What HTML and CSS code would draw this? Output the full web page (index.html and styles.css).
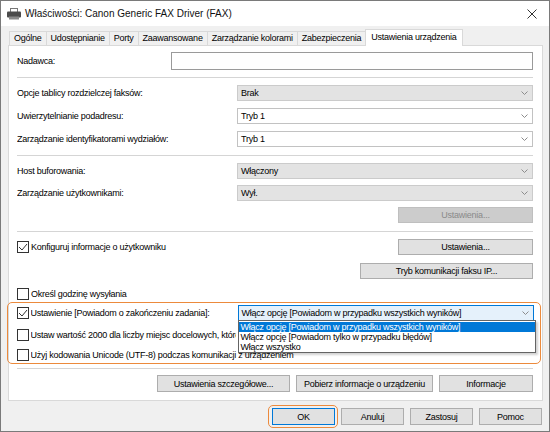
FILE: index.html
```html
<!DOCTYPE html>
<html lang="pl">
<head>
    <meta charset="UTF-8">
    <title>Właściwości: Canon Generic FAX Driver (FAX)</title>
    <link rel="stylesheet" href="styles.css">
</head>
<body>
<div class="window">
    <div class="titlebar">
        <svg class="app-icon" width="14" height="12" viewBox="0 0 14 12">
            <rect x="3.5" y="0.5" width="7" height="4" fill="#fff" stroke="#777"/>
            <rect x="0" y="3.5" width="14" height="6" rx="1" fill="#4b4b4b"/>
            <rect x="2" y="8.5" width="10" height="3" fill="#8a8a8a"/>
        </svg>
        <span class="title">Właściwości: Canon Generic FAX Driver (FAX)</span>
        <svg class="close" width="10" height="10" viewBox="0 0 10 10">
            <path d="M0.5 0.5 L9.5 9.5 M9.5 0.5 L0.5 9.5" stroke="#333" stroke-width="1"/>
        </svg>
    </div>

    <div class="tabs">
        <div class="tab">Ogólne</div>
        <div class="tab">Udostępnianie</div>
        <div class="tab">Porty</div>
        <div class="tab">Zaawansowane</div>
        <div class="tab">Zarządzanie kolorami</div>
        <div class="tab">Zabezpieczenia</div>
        <div class="tab active">Ustawienia urządzenia</div>
    </div>

    <div class="panel">
        <div class="row field-row">
            <span class="label">Nadawca:</span>
            <div class="text-field"></div>
        </div>
        <div class="sep"></div>

        <div class="group">
            <div class="row">
                <span class="label">Opcje tablicy rozdzielczej faksów:</span>
                <div class="select readonly">Brak<svg class="chev" width="7" height="4" viewBox="0 0 7 4"><path d="M0.5 0.5 L3.5 3.5 L6.5 0.5" fill="none" stroke="#8c8c8c"/></svg></div>
            </div>
            <div class="row">
                <span class="label">Uwierzytelnianie podadresu:</span>
                <div class="select">Tryb 1<svg class="chev" width="7" height="4" viewBox="0 0 7 4"><path d="M0.5 0.5 L3.5 3.5 L6.5 0.5" fill="none" stroke="#8c8c8c"/></svg></div>
            </div>
            <div class="row">
                <span class="label">Zarządzanie identyfikatorami wydziałów:</span>
                <div class="select">Tryb 1<svg class="chev" width="7" height="4" viewBox="0 0 7 4"><path d="M0.5 0.5 L3.5 3.5 L6.5 0.5" fill="none" stroke="#8c8c8c"/></svg></div>
            </div>
        </div>
        <div class="sep sep-wide"></div>

        <div class="group tight">
            <div class="row">
                <span class="label">Host buforowania:</span>
                <div class="select readonly">Włączony<svg class="chev" width="7" height="4" viewBox="0 0 7 4"><path d="M0.5 0.5 L3.5 3.5 L6.5 0.5" fill="none" stroke="#8c8c8c"/></svg></div>
            </div>
            <div class="row">
                <span class="label">Zarządzanie użytkownikami:</span>
                <div class="select readonly">Wył.<svg class="chev" width="7" height="4" viewBox="0 0 7 4"><path d="M0.5 0.5 L3.5 3.5 L6.5 0.5" fill="none" stroke="#8c8c8c"/></svg></div>
            </div>
            <div class="row end">
                <div class="btn disabled w-settings">Ustawienia...</div>
            </div>
        </div>
        <div class="sep sep-wide"></div>

        <div class="group loose">
            <div class="row">
                <span class="check checked"><svg width="10" height="10" viewBox="0 0 10 10"><path d="M1 5 L4 8 L9 2" fill="none" stroke="#333" stroke-width="1"/></svg></span>
                <span class="label">Konfiguruj informacje o użytkowniku</span>
                <div class="btn w-settings">Ustawienia...</div>
            </div>
            <div class="row end">
                <div class="btn w-ipfax">Tryb komunikacji faksu IP...</div>
            </div>
            <div class="row check-row">
                <span class="check"></span>
                <span class="label">Określ godzinę wysyłania</span>
            </div>
        </div>

        <div class="highlight-box">
            <div class="row">
                <span class="check checked"><svg width="10" height="10" viewBox="0 0 10 10"><path d="M1 5 L4 8 L9 2" fill="none" stroke="#333" stroke-width="1"/></svg></span>
                <span class="label">Ustawienie [Powiadom o zakończeniu zadania]:</span>
                <div class="select focused">Włącz opcję [Powiadom w przypadku wszystkich wyników]<svg class="chev" width="7" height="4" viewBox="0 0 7 4"><path d="M0.5 0.5 L3.5 3.5 L6.5 0.5" fill="none" stroke="#8c8c8c"/></svg>
                    <ul class="dropdown">
                        <li class="selected">Włącz opcję [Powiadom w przypadku wszystkich wyników]</li>
                        <li>Włącz opcję [Powiadom tylko w przypadku błędów]</li>
                        <li>Włącz wszystko</li>
                    </ul>
                </div>
            </div>
            <div class="row check-row first">
                <span class="check"></span>
                <span class="label clipped">Ustaw wartość 2000 dla liczby miejsc docelowych, które można określić</span>
            </div>
            <div class="row check-row">
                <span class="check"></span>
                <span class="label">Użyj kodowania Unicode (UTF-8) podczas komunikacji z urządzeniem</span>
            </div>
        </div>
        <div class="sep sep-bottom"></div>

        <div class="button-row">
            <div class="btn w-detail">Ustawienia szczegółowe...</div>
            <div class="btn w-fetch">Pobierz informacje o urządzeniu</div>
            <div class="btn w-info">Informacje</div>
        </div>
    </div>

    <div class="dialog-buttons">
        <div class="btn dlg default">OK</div>
        <div class="btn dlg">Anuluj</div>
        <div class="btn dlg">Zastosuj</div>
        <div class="btn dlg">Pomoc</div>
    </div>
</div>
</body>
</html>
```

FILE: styles.css
```css
* {
    box-sizing: border-box;
}
body {
    margin: 0;
    font-family: "Liberation Sans", Arial, sans-serif;
    font-size: 9px;
    letter-spacing: -0.25px;
    color: #000;
    background: #fff;
}
.window {
    width: 550px;
    height: 432px;
    border: 1px solid #7a7a7a;
    background: #f0f0f0;
}

/* title bar */
.titlebar {
    height: 25px;
    background: #fff;
    display: flex;
    align-items: center;
    padding: 0 12px 0 6px;
}
.app-icon {
    margin-right: 4px;
}
.title {
    flex: 1;
    font-size: 10px;
    letter-spacing: 0;
    color: #111;
}

/* tabs */
.tabs {
    height: 19px;
    display: flex;
    align-items: flex-end;
    padding-left: 8px;
}
.tab {
    height: 14px;
    line-height: 13px;
    padding: 0 4px;
    border: 1px solid #d9d9d9;
    border-bottom: none;
    margin-right: -1px;
    background: #f0f0f0;
    white-space: nowrap;
}
.tab.active {
    height: 17px;
    line-height: 14px;
    padding: 0 5px;
    margin-bottom: -1px;
    background: #fff;
    position: relative;
    z-index: 1;
}

/* page */
.panel {
    margin-left: 7px;
    width: 535px;
    height: 356px;
    background: #fff;
    border: 1px solid #d9d9d9;
    padding: 6px 9px 0 8px;
}
.row {
    display: flex;
    align-items: center;
    height: 16px;
}
.row.end {
    justify-content: flex-end;
}
.label {
    flex: 1;
    white-space: nowrap;
    overflow: hidden;
}
.label.clipped {
    flex: none;
    width: 205px;
}
.field-row {
    height: 18px;
}
.text-field {
    width: 362px;
    height: 18px;
    border: 1px solid #9a9a9a;
    background: #fff;
}
.sep {
    height: 1px;
    background: #d5d5d5;
    margin: 7px 0;
}
.sep-wide {
    margin-top: 8px;
}
.sep-bottom {
    margin: 4px 0 6px;
}
.group {
    display: flex;
    flex-direction: column;
    gap: 7px;
}
.group.tight {
    gap: 6px;
}
.group.loose {
    gap: 8px;
}
.check-row {
    height: 14px;
}

/* combo boxes */
.select {
    position: relative;
    width: 296px;
    height: 16px;
    flex: none;
    border: 1px solid #c2c2c2;
    background: #fff;
    display: flex;
    align-items: center;
    justify-content: space-between;
    padding: 0 4px 0 3px;
}
.select.readonly {
    background: #e3e3e3;
    border-color: #cbcbcb;
}
.select.focused {
    background: #e5f1fb;
    border-color: #0078d7;
}
.dropdown {
    position: absolute;
    top: 14px;
    left: -1px;
    width: 298px;
    margin: 0;
    padding: 1px 0 0;
    list-style: none;
    background: #fff;
    border: 1px solid #646464;
    box-shadow: 2px 2px 2px rgba(0, 0, 0, 0.18);
    z-index: 5;
}
.dropdown li {
    height: 10px;
    line-height: 10px;
    padding-left: 2px;
    white-space: nowrap;
}
.dropdown li.selected {
    background: #0078d7;
    color: #fff;
}

/* check boxes */
.check {
    width: 12px;
    height: 12px;
    flex: none;
    border: 1px solid #333;
    background: #fff;
    margin-right: 2px;
    display: flex;
    align-items: center;
    justify-content: center;
}

/* buttons */
.btn {
    height: 16px;
    flex: none;
    border: 1px solid #adadad;
    background: #e1e1e1;
    display: flex;
    align-items: center;
    justify-content: center;
    white-space: nowrap;
}
.btn.disabled {
    background: #cccccc;
    border-color: #bfbfbf;
    color: #8a8a8a;
}
.w-settings {
    width: 135px;
}
.w-ipfax {
    width: 173px;
}
.w-detail {
    width: 133px;
}
.w-fetch {
    width: 137px;
}
.w-info {
    width: 94px;
}
.button-row {
    display: flex;
    justify-content: flex-end;
    gap: 6px;
}
.button-row .btn {
    height: 17px;
}

/* orange highlight around the notification option */
.highlight-box {
    margin: 1px -8px 0 -10px;
    padding: 2px 6.5px 0 8.5px;
    height: 62px;
    border: 1.5px solid #ec8a3c;
    border-radius: 5px;
}
.highlight-box .check-row.first {
    margin-top: 7px;
}
.highlight-box .check-row + .check-row {
    margin-top: 6px;
}

/* dialog buttons */
.dialog-buttons {
    display: flex;
    justify-content: flex-end;
    gap: 6px;
    margin-top: 7px;
    padding-right: 7px;
}
.btn.dlg {
    width: 63px;
    height: 17px;
}
.btn.default {
    position: relative;
    border-color: #0078d7;
}
.btn.default::after {
    content: "";
    position: absolute;
    top: -4px;
    left: -5px;
    right: -4px;
    bottom: -4px;
    border: 1.5px solid #ec8a3c;
    border-radius: 5px;
}
```
